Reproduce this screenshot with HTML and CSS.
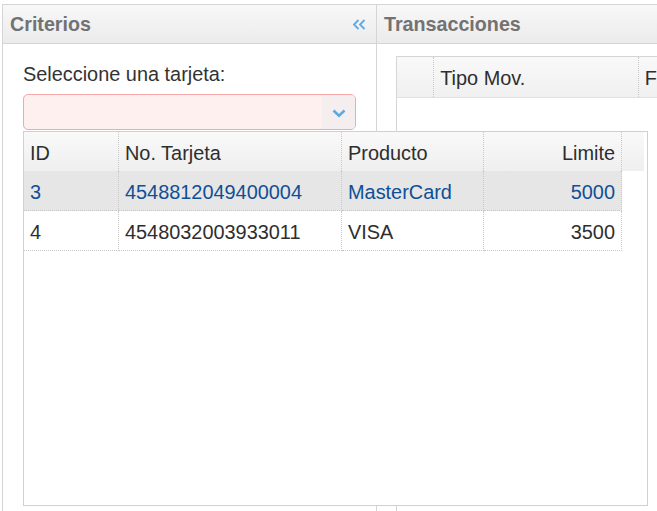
FILE: index.html
```html
<!DOCTYPE html>
<html lang="es">
<head>
<meta charset="utf-8">
<link rel="stylesheet" href="styles.css">
</head>
<body>
<div class="layout">
  <section class="panel panel-left">
    <header class="panel-head">
      <span class="panel-title">Criterios</span>
      <svg class="collapse" width="14" height="11" viewBox="0 0 14 11"><polyline points="6.5,1 2,5.5 6.5,10" fill="none" stroke="#5aaae6" stroke-width="1.8"/><polyline points="12.5,1 8,5.5 12.5,10" fill="none" stroke="#5aaae6" stroke-width="1.8"/></svg>
    </header>
    <div class="panel-body">
      <label class="field-label">Seleccione una tarjeta:</label>
      <div class="combo">
        <div class="combo-input"></div>
        <div class="combo-btn">
          <svg width="14" height="9" viewBox="0 0 14 9"><polyline points="1.5,1.5 7,6.8 12.5,1.5" fill="none" stroke="#5aaae6" stroke-width="2.6"/></svg>
        </div>
      </div>
    </div>
  </section>
  <section class="panel panel-right">
    <header class="panel-head">
      <span class="panel-title">Transacciones</span>
    </header>
    <div class="panel-body-right">
      <div class="tgrid">
        <div class="tgrid-head">
          <div class="th th-first"></div>
          <div class="th th-tipo">Tipo Mov.</div>
          <div class="th th-f">F</div>
        </div>
      </div>
    </div>
  </section>
</div>

<div class="popup">
  <div class="popup-head">
    <div class="pc c-id">ID</div>
    <div class="pc c-no">No. Tarjeta</div>
    <div class="pc c-prod">Producto</div>
    <div class="pc c-lim">Limite</div>
  </div>
  <div class="prow selected">
    <div class="pc c-id">3</div>
    <div class="pc c-no">4548812049400004</div>
    <div class="pc c-prod">MasterCard</div>
    <div class="pc c-lim">5000</div>
  </div>
  <div class="prow">
    <div class="pc c-id">4</div>
    <div class="pc c-no">4548032003933011</div>
    <div class="pc c-prod">VISA</div>
    <div class="pc c-lim">3500</div>
  </div>
</div>
</body>
</html>
```
FILE: styles.css
```css
html, body {
  margin: 0;
  padding: 0;
  width: 657px;
  height: 511px;
  overflow: hidden;
  background: #fff;
  font-family: "Liberation Sans", Arial, sans-serif;
  color: #2e2e2e;
}
.layout {
  display: flex;
  margin: 4px 0 0 2px;
  height: 507px;
  overflow: hidden;
}
.panel {
  border-top: 1px solid #d5d5d5;
  box-sizing: border-box;
  overflow: hidden;
}
.panel-left {
  width: 375px;
  flex: none;
  border-left: 1px solid #d5d5d5;
  border-right: 1px solid #d5d5d5;
}
.panel-right {
  flex: 1;
  min-width: 0;
}
.panel-head {
  height: 38px;
  border-bottom: 1px solid #d5d5d5;
  background: linear-gradient(#f8f8f8, #ebebeb);
  display: flex;
  align-items: center;
  justify-content: space-between;
  padding: 0 10px 0 7px;
}
.panel-title {
  font-weight: bold;
  font-size: 19.7px;
  color: #727272;
}
.panel-body {
  padding: 18px 0 0 20px;
}
.field-label {
  display: block;
  font-size: 19.9px;
  line-height: 24px;
  color: #333;
}
.combo {
  margin-top: 8px;
  width: 333px;
  height: 36px;
  box-sizing: border-box;
  border: 1px solid #f6a8a8;
  border-radius: 5px;
  background: #fff0f0;
  display: flex;
  overflow: hidden;
}
.combo-input {
  flex: 1;
}
.combo-btn {
  width: 33px;
  background: #f4eeee;
  display: flex;
  align-items: center;
  justify-content: center;
  padding-top: 2px;
  box-sizing: border-box;
}
.panel-body-right {
  padding: 12px 0 0 19px;
}
.tgrid {
  border: 1px solid #d5d5d5;
  border-right: none;
  height: 500px;
  overflow: hidden;
}
.tgrid-head {
  display: flex;
  height: 40px;
  border-bottom: 1px solid #e2e2e2;
  background: linear-gradient(#f9f9f9, #f0f0f0);
  font-size: 19.9px;
}
.th {
  display: flex;
  align-items: center;
  padding: 2px 0 0 6px;
  box-sizing: border-box;
  border-left: 1px dotted #c8c8c8;
  white-space: nowrap;
}
.th-first {
  width: 37px;
  border-left: none;
}
.th-tipo {
  width: 210px;
}
.th-f {
  flex: 1;
}
.popup {
  position: absolute;
  left: 23px;
  top: 131px;
  width: 625px;
  height: 375px;
  box-sizing: border-box;
  border: 1px solid #d0d0d0;
  background: #fff;
  font-size: 19.9px;
}
.popup-head {
  display: flex;
  height: 39px;
  width: 620px;
  background: linear-gradient(#f9f9f9, #efefef);
}
.prow {
  display: flex;
  width: 598px;
  height: 40px;
}
.pc {
  box-sizing: border-box;
  display: flex;
  align-items: center;
  padding: 3px 6px 0;
  border-right: 1px dotted #c8c8c8;
  white-space: nowrap;
}
.prow .pc {
  border-bottom: 1px dotted #c8c8c8;
}
.c-id { width: 95px; }
.c-no { width: 223px; }
.c-prod { width: 142px; }
.c-lim { width: 138px; justify-content: flex-end; }
.selected {
  background: #e6e6e6;
  color: #0f4f96;
}
```
